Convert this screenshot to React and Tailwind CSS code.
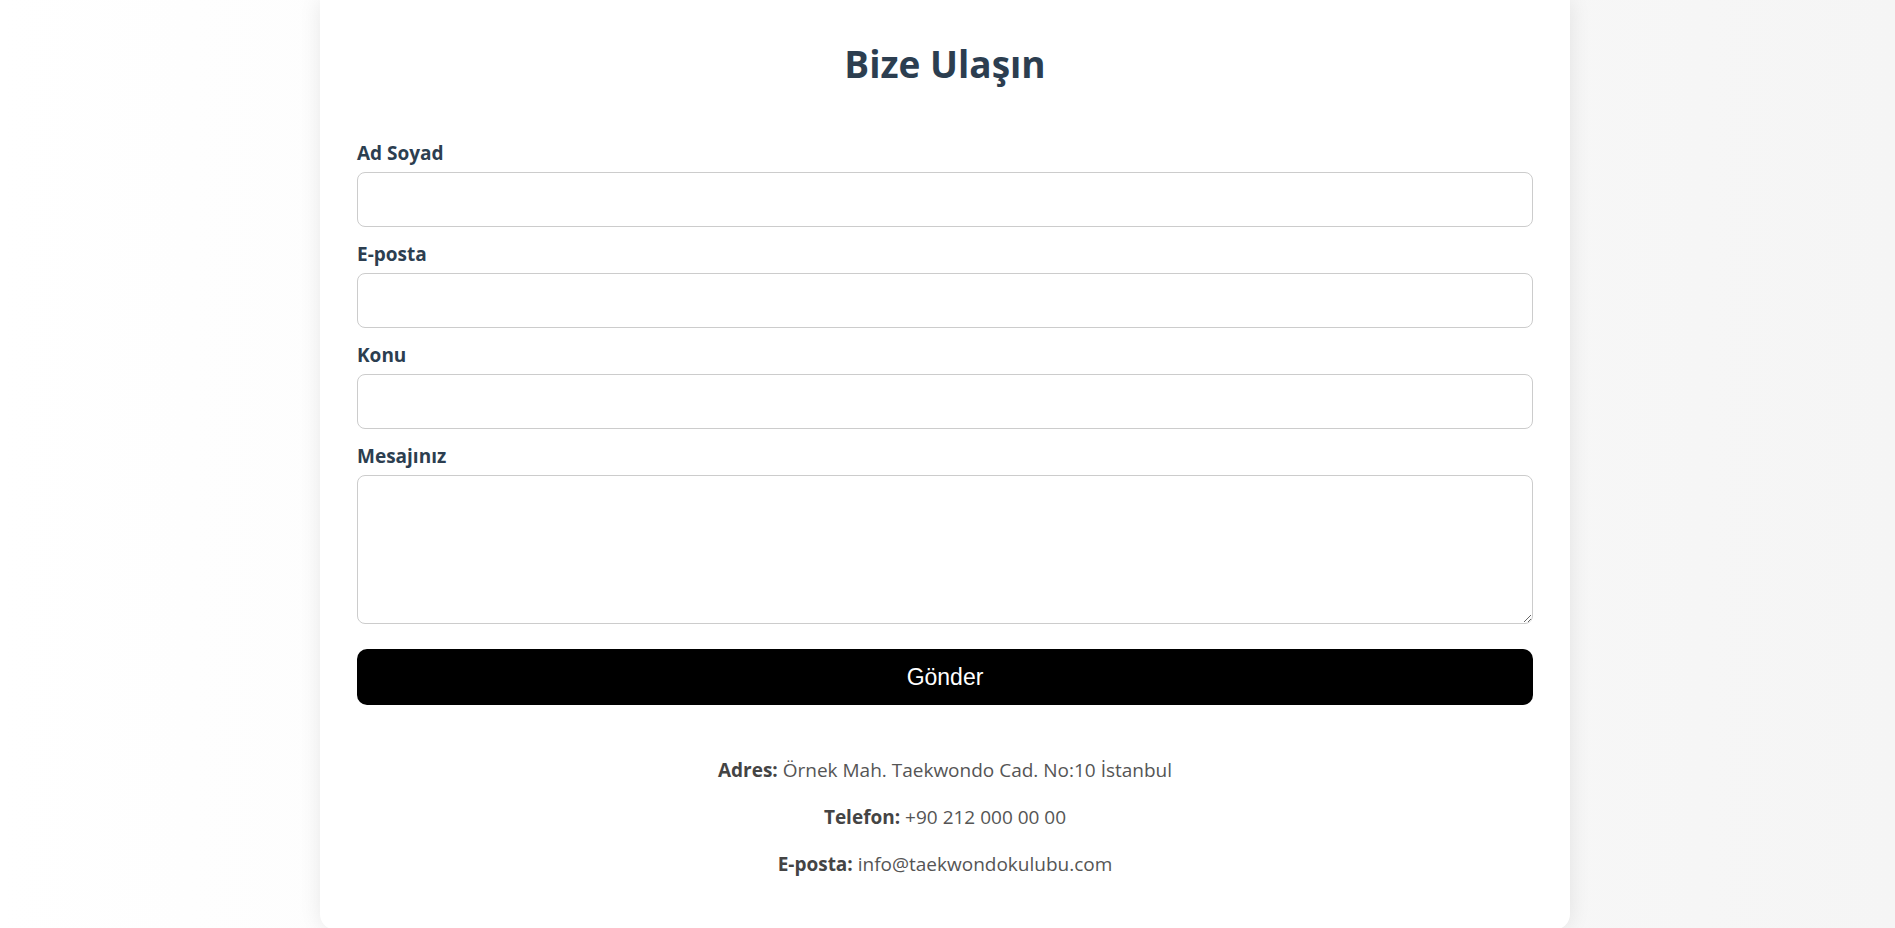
const fields = [
  { id: 'name', label: 'Ad Soyad', type: 'text' },
  { id: 'email', label: 'E-posta', type: 'email' },
  { id: 'subject', label: 'Konu', type: 'text' },
];

const info = [
  { label: 'Adres:', value: 'Örnek Mah. Taekwondo Cad. No:10 İstanbul' },
  { label: 'Telefon:', value: '+90 212 000 00 00' },
  { label: 'E-posta:', value: 'info@taekwondokulubu.com' },
];

const App = () => {
  return (
    <div className="min-h-[928px] bg-linear-to-r from-white to-[#f5f5f5] font-['Open_Sans',sans-serif]">
      <div className="flex justify-center pr-[5px]">
        <div className="w-[1250px] bg-white rounded-b-[16px] shadow-[0_0_22px_rgba(0,0,0,0.09)] px-[37px] pt-[41px] pb-[52px]">
          <h2 className="text-center text-[37px] leading-[46px] font-bold text-[#2c3e50] mb-[54px]">
            Bize Ulaşın
          </h2>

          <form className="flex flex-col">
            {fields.map((f) => (
              <div key={f.id} className="flex flex-col mb-[15px]">
                <label htmlFor={f.id} className="text-[19px] leading-[24px] font-bold text-[#2c3e50] mb-[7px]">
                  {f.label}
                </label>
                <input
                  id={f.id}
                  type={f.type}
                  className="h-[55px] w-full rounded-lg border border-[#cccccc] bg-white px-3 outline-none"
                />
              </div>
            ))}
            <div className="flex flex-col">
              <label htmlFor="message" className="text-[19px] leading-[24px] font-bold text-[#2c3e50] mb-[7px]">
                Mesajınız
              </label>
              <textarea
                id="message"
                className="h-[149px] w-full rounded-lg border border-[#cccccc] bg-white px-3 py-2 outline-none"
              />
            </div>

            <button
              type="button"
              className="mt-[25px] h-[56px] w-full rounded-[10px] bg-black text-white text-[23px] font-['Liberation_Sans',Arial,sans-serif]"
            >
              Gönder
            </button>
          </form>

          <div className="mt-[52px] flex flex-col gap-[20px] text-center text-[19px] leading-[27px] text-[#555555]">
            {info.map((i) => (
              <p key={i.label}>
                <strong className="font-bold text-[#444444]">{i.label}</strong> {i.value}
              </p>
            ))}
          </div>
        </div>
      </div>
    </div>
  );
};

export default App;
